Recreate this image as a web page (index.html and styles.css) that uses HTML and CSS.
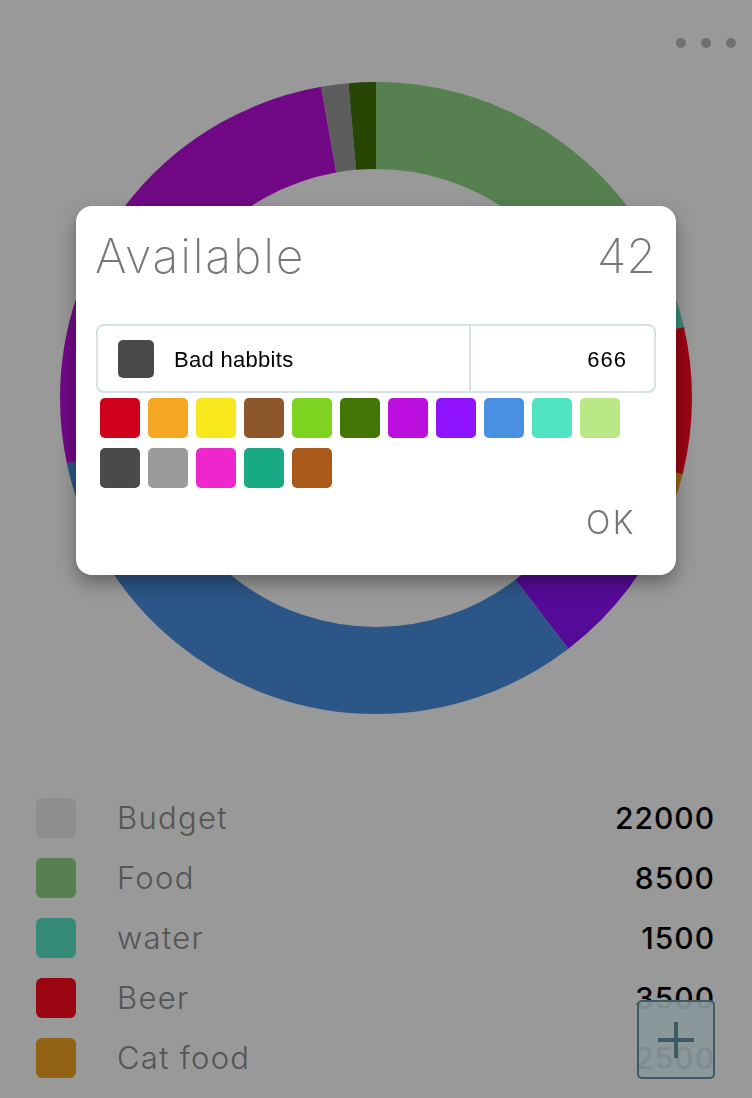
FILE: index.html
```html
<!DOCTYPE html>
<html lang="en">
<head>
<meta charset="utf-8">
<title>Budget</title>
<link rel="stylesheet" href="styles.css">
</head>
<body>
<div class="app">
  <header class="topbar">
    <div class="more"><span class="dot"></span><span class="dot"></span><span class="dot"></span></div>
  </header>
  <div class="chart">
    <svg width="632" height="632" viewBox="0 0 632 632">
      <g transform="rotate(-90 316 316)" fill="none" stroke-width="87">
        <circle cx="316" cy="316" r="272.5" pathLength="360" stroke="#8fd585" stroke-dasharray="73 287" stroke-dashoffset="0"/>
        <circle cx="316" cy="316" r="272.5" pathLength="360" stroke="#5ae8c8" stroke-dasharray="4 356" stroke-dashoffset="-73"/>
        <circle cx="316" cy="316" r="272.5" pathLength="360" stroke="#ff0a1e" stroke-dasharray="27 333" stroke-dashoffset="-77"/>
        <circle cx="316" cy="316" r="272.5" pathLength="360" stroke="#f5a623" stroke-dasharray="7 353" stroke-dashoffset="-104"/>
        <circle cx="316" cy="316" r="272.5" pathLength="360" stroke="#9013fe" stroke-dasharray="31.5 328.5" stroke-dashoffset="-111"/>
        <circle cx="316" cy="316" r="272.5" pathLength="360" stroke="#4a90e2" stroke-dasharray="115.5 244.5" stroke-dashoffset="-142.5"/>
        <circle cx="316" cy="316" r="272.5" pathLength="360" stroke="#bd10e0" stroke-dasharray="92 268" stroke-dashoffset="-258"/>
        <circle cx="316" cy="316" r="272.5" pathLength="360" stroke="#9b9b9b" stroke-dasharray="5 355" stroke-dashoffset="-350"/>
        <circle cx="316" cy="316" r="272.5" pathLength="360" stroke="#417505" stroke-dasharray="5 355" stroke-dashoffset="-355"/>
      </g>
    </svg>
  </div>
  <ul class="legend">
    <li class="legend-row"><span class="swatch sw-budget"></span><span class="label">Budget</span><span class="amount">22000</span></li>
    <li class="legend-row"><span class="swatch sw-food"></span><span class="label">Food</span><span class="amount">8500</span></li>
    <li class="legend-row"><span class="swatch sw-water"></span><span class="label">water</span><span class="amount">1500</span></li>
    <li class="legend-row"><span class="swatch sw-beer"></span><span class="label">Beer</span><span class="amount">3500</span></li>
    <li class="legend-row"><span class="swatch sw-cat"></span><span class="label">Cat food</span><span class="amount">2500</span></li>
  </ul>
</div>

<div class="overlay"></div>

<div class="dialog">
  <div class="dialog-head">
    <span class="dialog-title">Available</span>
    <span class="dialog-avail">42</span>
  </div>
  <div class="entry">
    <div class="entry-name"><span class="entry-swatch"></span><span class="entry-text">Bad habbits</span></div>
    <div class="entry-value">666</div>
  </div>
  <div class="palette">
    <span class="pick p1"></span><span class="pick p2"></span><span class="pick p3"></span><span class="pick p4"></span>
    <span class="pick p5"></span><span class="pick p6"></span><span class="pick p7"></span><span class="pick p8"></span>
    <span class="pick p9"></span><span class="pick p10"></span><span class="pick p11"></span><span class="pick p12"></span>
    <span class="pick p13"></span><span class="pick p14"></span><span class="pick p15"></span><span class="pick p16"></span>
  </div>
  <div class="dialog-foot"><button class="ok">OK</button></div>
</div>

<button class="fab" aria-label="Add">
  <svg width="40" height="40" viewBox="0 0 40 40"><path d="M20 2 V38 M2 20 H38" stroke="#3d5a66" stroke-width="4" fill="none"/></svg>
</button>
</body>
</html>
```
FILE: styles.css
```css
html, body {
  margin: 0;
  padding: 0;
}
body {
  width: 752px;
  height: 1098px;
  overflow: hidden;
  position: relative;
  background: #ffffff;
  font-family: Inter, "DejaVu Sans", sans-serif;
}
.app {
  display: flex;
  flex-direction: column;
}
.topbar {
  display: flex;
  justify-content: flex-end;
  height: 82px;
  box-sizing: border-box;
  padding: 38px 16px 0 0;
}
.more {
  display: flex;
  gap: 15px;
  height: 10px;
}
.dot {
  width: 10px;
  height: 10px;
  border-radius: 50%;
  background: #bbbbbb;
}
.chart {
  display: flex;
  justify-content: center;
}
.chart svg {
  display: block;
}
.legend {
  list-style: none;
  margin: 84px 0 0;
  padding: 0 37px 0 36px;
  display: flex;
  flex-direction: column;
  gap: 20px;
}
.legend-row {
  display: flex;
  align-items: center;
  height: 40px;
}
.swatch {
  width: 40px;
  height: 40px;
  border-radius: 6px;
  margin-right: 41px;
  flex: none;
}
.sw-budget { background: #ededed; }
.sw-food { background: #8fd585; }
.sw-water { background: #5ae8c8; }
.sw-beer { background: #ff0a1e; }
.sw-cat { background: #f5a623; }
.label {
  flex: 1;
  font-size: 31px;
  font-weight: 300;
  line-height: 40px;
  color: #8e8e8e;
  letter-spacing: 1.3px;
}
.amount {
  font-size: 30px;
  font-weight: 500;
  line-height: 40px;
  color: #000;
  letter-spacing: 1px;
}
.overlay {
  position: fixed;
  inset: 0;
  background: rgba(0, 0, 0, 0.4);
}
.dialog {
  position: absolute;
  left: 76px;
  top: 206px;
  width: 600px;
  box-sizing: border-box;
  padding: 20px 20px 34px;
  background: #fff;
  border-radius: 16px;
  box-shadow: 0 8px 18px rgba(0, 0, 0, 0.35);
}
.dialog-head {
  display: flex;
  justify-content: space-between;
  align-items: baseline;
  color: #777;
  font-size: 48px;
  font-weight: 200;
  line-height: 60px;
}
.dialog-title {
  margin-left: -1px;
  letter-spacing: 1.8px;
}
.entry {
  margin-top: 38px;
  display: flex;
  height: 69px;
  box-sizing: border-box;
  border: 2px solid #d4e2e8;
  border-radius: 8px;
}
.entry-name {
  flex: 1;
  display: flex;
  align-items: center;
  gap: 20px;
  padding-left: 20px;
  border-right: 2px solid #d4e2e8;
}
.entry-swatch {
  width: 36px;
  height: 38px;
  border-radius: 5px;
  background: #4a4a4a;
}
.entry-text, .entry-value {
  font-family: "Liberation Sans", Arial, sans-serif;
  font-size: 22px;
  color: #000;
  padding-top: 3px;
}
.entry-text {
  letter-spacing: 0.3px;
}
.entry-value {
  width: 183px;
  box-sizing: border-box;
  padding-right: 27px;
  display: flex;
  align-items: center;
  justify-content: flex-end;
  letter-spacing: 1px;
}
.palette {
  margin-top: 5px;
  padding-left: 4px;
  display: flex;
  flex-wrap: wrap;
  gap: 10px 8px;
}
.pick {
  width: 40px;
  height: 40px;
  border-radius: 5px;
}
.p1 { background: #d0021b; }
.p2 { background: #f5a623; }
.p3 { background: #f8e71c; }
.p4 { background: #8b572a; }
.p5 { background: #7ed321; }
.p6 { background: #417505; }
.p7 { background: #bd10e0; }
.p8 { background: #9013fe; }
.p9 { background: #4a90e2; }
.p10 { background: #50e3c2; }
.p11 { background: #b8e986; }
.p12 { background: #4a4a4a; }
.p13 { background: #9b9b9b; }
.p14 { background: #ee27cd; }
.p15 { background: #18a985; }
.p16 { background: #a95a1a; }
.dialog-foot {
  display: flex;
  justify-content: flex-end;
  margin-top: 17px;
}
.ok {
  border: 0;
  background: none;
  padding: 0;
  margin-right: 20px;
  font-family: Inter, "DejaVu Sans", sans-serif;
  font-size: 32px;
  font-weight: 300;
  line-height: 36px;
  color: #777;
  letter-spacing: 2.5px;
}
.fab {
  position: absolute;
  left: 637px;
  top: 1000px;
  width: 78px;
  height: 79px;
  box-sizing: border-box;
  padding: 0;
  border: 2px solid #3d5a66;
  border-radius: 5px;
  background: rgba(137, 151, 155, 0.92);
  display: flex;
  align-items: center;
  justify-content: center;
}
.fab svg {
  display: block;
}
```
